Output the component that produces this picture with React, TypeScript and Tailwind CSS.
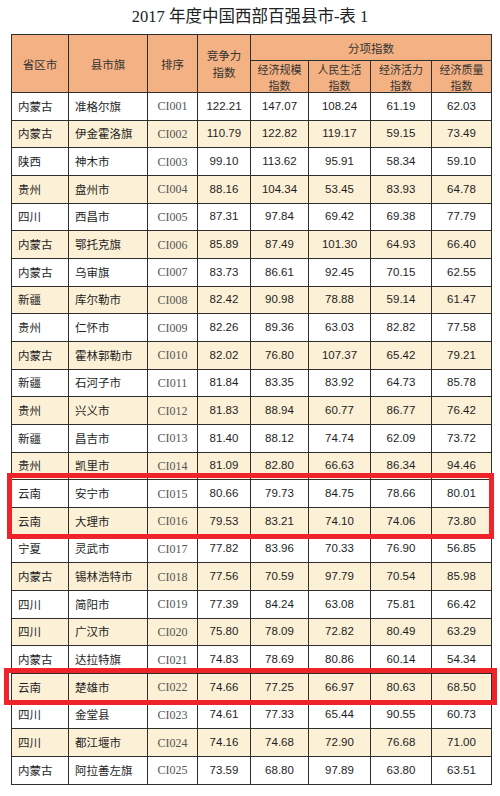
import React from "react";

type Row = [string, string, string, string, string, string, string, string];

const rows: Row[] = [
  ["内蒙古", "准格尔旗", "CI001", "122.21", "147.07", "108.24", "61.19", "62.03"],
  ["内蒙古", "伊金霍洛旗", "CI002", "110.79", "122.82", "119.17", "59.15", "73.49"],
  ["陕西", "神木市", "CI003", "99.10", "113.62", "95.91", "58.34", "59.10"],
  ["贵州", "盘州市", "CI004", "88.16", "104.34", "53.45", "83.93", "64.78"],
  ["四川", "西昌市", "CI005", "87.31", "97.84", "69.42", "69.38", "77.79"],
  ["内蒙古", "鄂托克旗", "CI006", "85.89", "87.49", "101.30", "64.93", "66.40"],
  ["内蒙古", "乌审旗", "CI007", "83.73", "86.61", "92.45", "70.15", "62.55"],
  ["新疆", "库尔勒市", "CI008", "82.42", "90.98", "78.88", "59.14", "61.47"],
  ["贵州", "仁怀市", "CI009", "82.26", "89.36", "63.03", "82.82", "77.58"],
  ["内蒙古", "霍林郭勒市", "CI010", "82.02", "76.80", "107.37", "65.42", "79.21"],
  ["新疆", "石河子市", "CI011", "81.84", "83.35", "83.92", "64.73", "85.78"],
  ["贵州", "兴义市", "CI012", "81.83", "88.94", "60.77", "86.77", "76.42"],
  ["新疆", "昌吉市", "CI013", "81.40", "88.12", "74.74", "62.09", "73.72"],
  ["贵州", "凯里市", "CI014", "81.09", "82.80", "66.63", "86.34", "94.46"],
  ["云南", "安宁市", "CI015", "80.66", "79.73", "84.75", "78.66", "80.01"],
  ["云南", "大理市", "CI016", "79.53", "83.21", "74.10", "74.06", "73.80"],
  ["宁夏", "灵武市", "CI017", "77.82", "83.96", "70.33", "76.90", "56.85"],
  ["内蒙古", "锡林浩特市", "CI018", "77.56", "70.59", "97.79", "70.54", "85.98"],
  ["四川", "简阳市", "CI019", "77.39", "84.24", "63.08", "75.81", "66.42"],
  ["四川", "广汉市", "CI020", "75.80", "78.09", "72.82", "80.49", "63.29"],
  ["内蒙古", "达拉特旗", "CI021", "74.83", "78.69", "80.86", "60.14", "54.34"],
  ["云南", "楚雄市", "CI022", "74.66", "77.25", "66.97", "80.63", "68.50"],
  ["四川", "金堂县", "CI023", "74.61", "77.33", "65.44", "90.55", "60.73"],
  ["四川", "都江堰市", "CI024", "74.16", "74.68", "72.90", "76.68", "71.00"],
  ["内蒙古", "阿拉善左旗", "CI025", "73.59", "68.80", "97.89", "63.80", "63.51"],
];

const cjk = { fontFamily: '"Noto Sans CJK SC", "Noto Sans", sans-serif' };
const num = { fontFamily: '"Liberation Sans", Arial, sans-serif' };
const serif = { fontFamily: '"Liberation Serif", "Noto Sans CJK SC", serif' };

const cols = "grid grid-cols-[57px_79px_50px_53px_58px_62px_61px_60px]";
const cell = "border-r border-b border-[#2e2e2e] flex items-center";

function Two({ a, b }: { a: string; b: string }) {
  return (
    <div className="flex flex-col items-center text-[11px] leading-[16px]">
      <span>{a}</span>
      <span>{b}</span>
    </div>
  );
}

export default function App() {
  return (
    <div className="relative w-[500px] h-[796px] bg-white overflow-hidden">
      <div
        className="h-[34px] flex items-center justify-center text-[16.5px] text-[#222] pt-[1px]"
        style={serif}
      >
        2017 年度中国西部百强县市-表 1
      </div>

      <div className="ml-[11px] w-[481px] border-l border-t border-[#2e2e2e]">
        {/* Header */}
        <div
          className={`${cols} grid-rows-[26px_32px] bg-[#f4b183] text-[#333] text-[11.5px] leading-[14px]`}
          style={cjk}
        >
          <div className={`${cell} row-span-2 justify-center`}>省区市</div>
          <div className={`${cell} row-span-2 justify-center`}>县市旗</div>
          <div className={`${cell} row-span-2 justify-center`}>排序</div>
          <div className={`${cell} row-span-2 justify-center`}>
            <div className="flex flex-col items-center leading-[17px]">
              <span>竞争力</span>
              <span>指数</span>
            </div>
          </div>
          <div className={`${cell} col-span-4 justify-center`}>分项指数</div>
          <div className={`${cell} justify-center`}>
            <Two a="经济规模" b="指数" />
          </div>
          <div className={`${cell} justify-center`}>
            <Two a="人民生活" b="指数" />
          </div>
          <div className={`${cell} justify-center`}>
            <Two a="经济活力" b="指数" />
          </div>
          <div className={`${cell} justify-center`}>
            <Two a="经济质量" b="指数" />
          </div>
        </div>

        {/* Body */}
        {rows.map((r, i) => (
          <div
            key={r[2]}
            className={`${cols} h-[27.68px] ${i % 2 === 1 ? "bg-[#fcf0d6]" : "bg-white"}`}
          >
            <div className={`${cell} pl-[6px] text-[11.5px] text-[#1e1e1e]`} style={cjk}>
              {r[0]}
            </div>
            <div className={`${cell} pl-[6px] text-[11.5px] text-[#1e1e1e]`} style={cjk}>
              {r[1]}
            </div>
            <div className={`${cell} justify-center text-[12px] text-[#555]`} style={serif}>
              {r[2]}
            </div>
            {r.slice(3).map((v, j) => (
              <div
                key={j}
                className={`${cell} justify-center text-[11.5px] text-[#1e1e1e]`}
                style={num}
              >
                {v}
              </div>
            ))}
          </div>
        ))}
      </div>

      {/* Highlight boxes */}
      <div className="absolute left-[7px] top-[473px] w-[487px] h-[66px] border-[5px] border-[#f0232b] pointer-events-none" />
      <div className="absolute left-[4px] top-[668px] w-[493px] h-[37px] border-[5px] border-[#f0232b] pointer-events-none" />
    </div>
  );
}
